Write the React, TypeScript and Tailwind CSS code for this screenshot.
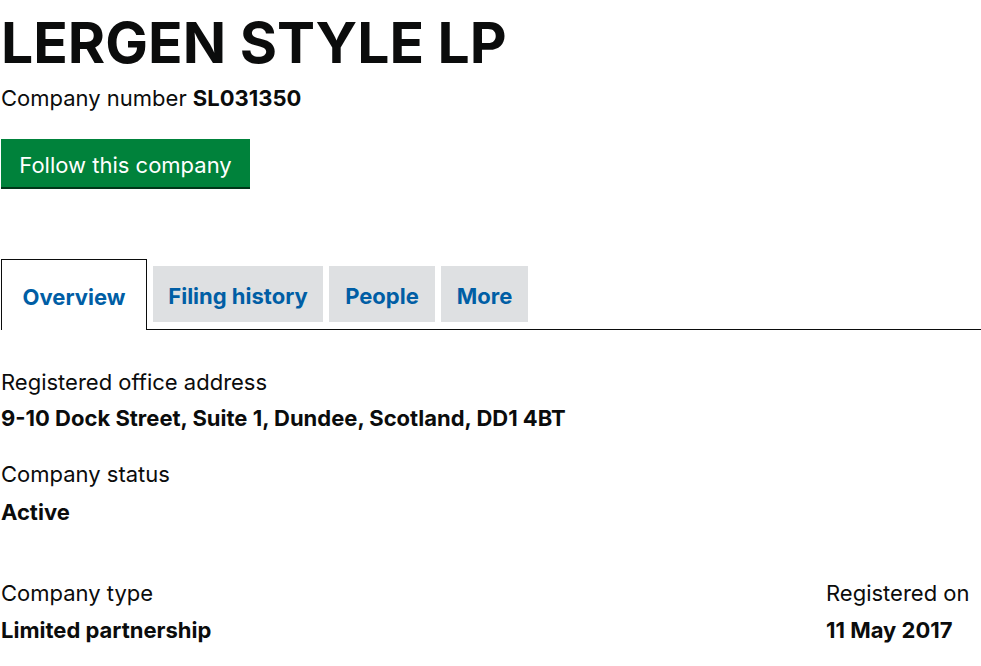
import React from 'react'

function Tab({ label, active, width }: { label: string; active?: boolean; width: string }) {
  if (active) {
    return (
      <div className="-mb-px flex h-[71px] w-[146px] items-center justify-center border border-b-0 border-[#0b0c0c] bg-white pt-[4px]">
        <span className="text-[22px] font-bold text-[#005ea5]">{label}</span>
      </div>
    )
  }
  return (
    <div className={`mb-[7px] ml-[6px] flex h-[56px] items-center justify-center bg-[#dee0e2] pt-[4px] ${width}`}>
      <span className="text-[22px] font-bold text-[#005ea5]">{label}</span>
    </div>
  )
}

export default function App() {
  return (
    <div className="min-h-[666px] bg-white pl-px font-['Inter',_'Liberation_Sans',_sans-serif] text-[#0b0c0c]">
      {/* Heading */}
      <h1 className="pt-[10px] text-[57px] leading-[66px] font-bold">LERGEN STYLE LP</h1>
      <p className="mt-[9px] text-[22px] leading-[26px]">
        Company number <strong className="font-bold">SL031350</strong>
      </p>

      {/* Follow button */}
      <button className="mt-[28px] h-[48px] w-[249px] bg-[#00823b] pt-[4px] text-[22px] text-white shadow-[0_2px_0_#003618]">
        Follow this company
      </button>

      {/* Tabs */}
      <div className="mt-[72px] flex items-end border-b border-[#0b0c0c]">
        <Tab label="Overview" active width="w-[146px]" />
        <Tab label="Filing history" width="w-[170px]" />
        <Tab label="People" width="w-[106px]" />
        <Tab label="More" width="w-[87px]" />
      </div>

      {/* Overview */}
      <dl className="mt-[39px]">
        <dt className="text-[22px] leading-[26px]">Registered office address</dt>
        <dd className="mt-[10px] text-[22px] leading-[26px] font-bold">9-10 Dock Street, Suite 1, Dundee, Scotland, DD1 4BT</dd>
      </dl>
      <dl className="mt-[30px]">
        <dt className="text-[22px] leading-[26px]">Company status</dt>
        <dd className="mt-[12px] text-[22px] leading-[26px] font-bold">Active</dd>
      </dl>
      <div className="mt-[55px] flex">
        <dl className="w-[825px]">
          <dt className="text-[22px] leading-[26px]">Company type</dt>
          <dd className="mt-[11px] text-[22px] leading-[26px] font-bold">Limited partnership</dd>
        </dl>
        <dl>
          <dt className="text-[22px] leading-[26px]">Registered on</dt>
          <dd className="mt-[11px] text-[22px] leading-[26px] font-bold">11 May 2017</dd>
        </dl>
      </div>
    </div>
  )
}
